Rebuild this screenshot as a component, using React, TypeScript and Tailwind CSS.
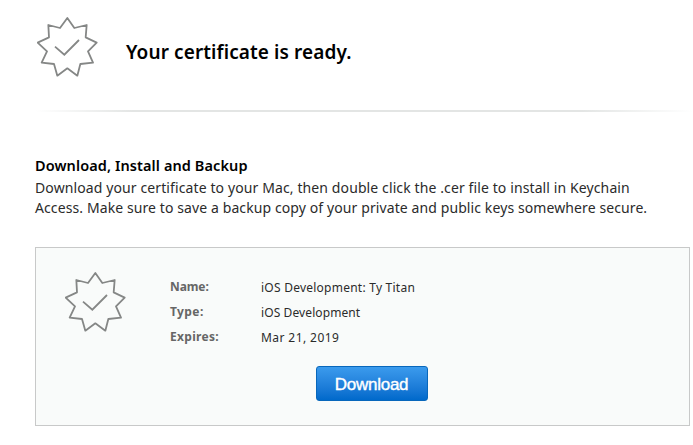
function Seal() {
  return (
    <svg width="62" height="62" viewBox="36 36 186 186" fill="none" stroke="#858786" strokeWidth="5.4" className="block shrink-0">
      <path d="M127 39 148 69 185 60 182 97 215 113 189 139 204 173 166 177 157 212 127 190 97 212 87 177 50 173 66 139 38 113 72 97 70 60 105 69Z" strokeLinejoin="round" />
      <path d="M90 125 118 149 162 105" />
    </svg>
  );
}

const details = [
  { label: "Name:", value: "iOS Development: Ty Titan", labelSpacing: "tracking-[-0.1px]", spacing: "tracking-[0.24px]" },
  { label: "Type:", value: "iOS Development", labelSpacing: "tracking-[0.4px]", spacing: "tracking-[0.1px]" },
  { label: "Expires:", value: "Mar 21, 2019", labelSpacing: "tracking-[0.3px]", spacing: "tracking-[0.42px]" },
];

export default function App() {
  return (
    <main className="h-[445px] w-[693px] overflow-hidden bg-white pl-[35px] font-['Noto_Sans',sans-serif] text-[#2b2b2b]">
      <header className="flex h-[110px] items-start pl-[2px] pt-[17px]">
        <Seal />
        <h1 className="ml-[27px] mt-[22px] whitespace-nowrap text-[19px] font-semibold leading-[26px] tracking-[0.1px] text-black">Your certificate is ready.</h1>
      </header>
      <div className="h-[2px] w-[658px] bg-gradient-to-r from-white via-[#e3e5e4] via-15% to-white">
        <div className="ml-auto h-[2px] w-[560px] bg-gradient-to-r from-[#e3e5e4] from-80% to-white" />
      </div>
      <section className="pt-[44px]">
        <h2 className="whitespace-nowrap text-[14.5px] font-semibold leading-[18px] tracking-[0.1px] text-black">Download, Install and Backup</h2>
        <p className="mt-1 whitespace-nowrap text-[14px] leading-5">
          <span className="block tracking-[0.11px]">Download your certificate to your Mac, then double click the .cer file to install in Keychain</span>
          <span className="block tracking-[0.1px]">Access. Make sure to save a backup copy of your private and public keys somewhere secure.</span>
        </p>
      </section>
      <section className="mt-[29px] flex h-[179px] w-[655px] flex-col border border-[#c8c9c9] bg-[#f9fbfa]">
        <div className="flex pl-[29px] pt-[24px]">
          <Seal />
          <dl className="ml-[43px] mt-[2px]">
            {details.map((item) => (
              <div key={item.label} className="flex h-[25px] whitespace-nowrap text-[12px]">
                <dt className={`w-[91px] font-bold leading-[25px] text-[#666] ${item.labelSpacing}`}>{item.label}</dt>
                <dd className={`leading-[27px] ${item.spacing}`}>{item.value}</dd>
              </div>
            ))}
          </dl>
        </div>
        <button className="ml-[280px] mt-[17px] h-[35px] w-[112px] rounded-[3px] border border-[#0867bb] bg-gradient-to-b from-[#3b9bed] to-[#0069cb] pr-px pt-[2px] font-['Liberation_Sans',Arial,sans-serif] text-[17px] tracking-[-0.25px] text-white [-webkit-text-stroke:0.4px_white]">Download</button>
      </section>
    </main>
  );
}
